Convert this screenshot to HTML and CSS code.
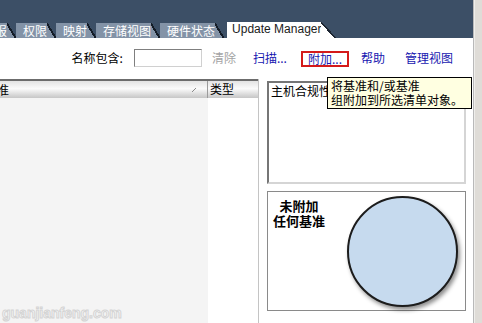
FILE: index.html
```html
<!DOCTYPE html>
<html lang="zh-CN">
<head>
    <meta charset="UTF-8">
    <title>Update Manager</title>
    <link rel="stylesheet" href="styles.css">
</head>
<body>
    <div class="window">
        <div class="main">
            <!-- Вкладки -->
            <div class="tabbar">
                <div class="tab first">警报</div>
                <div class="tab">权限</div>
                <div class="tab">映射</div>
                <div class="tab">存储视图</div>
                <div class="tab">硬件状态</div>
                <div class="tab active">Update Manager</div>
            </div>

            <!-- Панель действий -->
            <div class="toolbar">
                <label class="filter-label" for="filter">名称包含:</label>
                <input class="filter-input" id="filter" type="text">
                <span class="link disabled">清除</span>
                <a class="link scan">扫描...</a>
                <a class="link attach">附加...</a>
                <a class="link help">帮助</a>
                <a class="link admin">管理视图</a>
            </div>

            <div class="content">
                <div class="list">
                    <div class="list-head">
                        <div class="col-name"><span class="col-title">基准</span>
                            <svg class="sort" width="6" height="6" viewBox="0 0 6 6"><path d="M1 5 L5 1" stroke="#8a8a8a" stroke-width="1"/></svg>
                        </div>
                        <div class="col-type">类型</div>
                    </div>
                    <div class="list-body">
                        <div class="fill-name"></div>
                        <div class="fill-type"></div>
                    </div>
                </div>

                <div class="side">
                    <div class="compliance">
                        <div class="compliance-head">主机合规性</div>
                    </div>
                    <div class="chart">
                        <div class="chart-label">未附加<br>任何基准</div>
                        <div class="pie"></div>
                    </div>
                </div>
            </div>

            <div class="tooltip">将基准和/或基准<br>组附加到所选清单对象。</div>
            <div class="watermark">guanjianfeng.com</div>
        </div>
        <div class="edge"></div>
    </div>
</body>
</html>
```

FILE: styles.css
```css
* {
    box-sizing: border-box;
}

body {
    margin: 0;
    background: #fff;
    font-family: "Noto Sans CJK SC", sans-serif;
    font-size: 12px;
    color: #000;
}

.window {
    display: flex;
    width: 482px;
    height: 323px;
    overflow: hidden;
}

.main {
    position: relative;
    width: 474px;
    display: flex;
    flex-direction: column;
    border-right: 1px solid #b9b9b9;
}

.edge {
    flex: 1;
    background: #dfdcd7;
    border-left: 1px solid #efeeeb;
}

/* Вкладки */
.tabbar {
    height: 38px;
    flex-shrink: 0;
    background: #3c4f66;
    display: flex;
    align-items: flex-end;
}

.tab {
    position: relative;
    height: 15px;
    line-height: 15px;
    padding: 0 0 0 7px;
    margin-right: 9px;
    background: #8393a7;
    color: #fff;
    white-space: nowrap;
}

.tab::after {
    content: "";
    position: absolute;
    left: 100%;
    top: 0;
    width: 9px;
    height: 15px;
    background: linear-gradient(to top right, #8393a7 0 42%, #141c27 42% 54%, transparent 54%);
}

.tab.first {
    margin-left: -24px;
}

.tab.active {
    background: #fff;
    color: #1b1b1b;
    padding-left: 5px;
    margin-left: 3px;
    font-family: "Liberation Sans", sans-serif;
    font-size: 12px;
    height: 16px;
}

.tab.active::after {
    width: 15px;
    height: 16px;
    background: linear-gradient(to top right, #fff 0 45%, #1c2531 45% 52%, transparent 52%);
}

/* Панель действий */
.toolbar {
    height: 41px;
    flex-shrink: 0;
    display: flex;
    align-items: center;
    justify-content: flex-end;
    padding: 0 20px 2px 0;
    line-height: 16px;
}

.filter-input {
    width: 68px;
    height: 18px;
    margin: 0 0 0 11px;
    border: 1px solid #7f7f7f;
    border-right-color: #d0d0d0;
    border-bottom-color: #d0d0d0;
    padding: 0;
    background: #fff;
}

.link {
    color: #1717b0;
    white-space: nowrap;
}

.link.disabled {
    color: #a3a3a3;
    margin-left: 10px;
}

.link.scan {
    margin-left: 17px;
}

.link.attach {
    margin-left: 14px;
    margin-top: 3px;
    border: 2px solid #d41a1a;
    padding: 0 5px;
    line-height: 12px;
    height: 16px;
}

.link.help {
    margin-left: 12px;
}

.link.admin {
    margin-left: 20px;
}

/* Список */
.content {
    flex: 1;
    display: flex;
}

.list {
    width: 259px;
    display: flex;
    flex-direction: column;
    border-right: 1px solid #c4c4c4;
}

.list-head {
    display: flex;
    height: 19px;
    border-top: 2px solid #6c6c6c;
    background: linear-gradient(#e3e3e3, #fbfbfb 45%, #c6c6c6);
    line-height: 16px;
}

.col-name {
    width: 208px;
    display: flex;
    align-items: center;
    border-right: 1px solid #9b9b9b;
    overflow: hidden;
}

.col-title {
    margin-left: -15px;
}

.sort {
    margin-left: auto;
    margin-right: 10px;
}

.col-type {
    flex: 1;
    padding-left: 2px;
}

.list-body {
    flex: 1;
    display: flex;
}

.fill-name {
    width: 208px;
    background: #f4f4f4;
}

.fill-type {
    flex: 1;
    background: #fff;
}

/* Правая часть */
.side {
    flex: 1;
    padding: 2px 7px 0 8px;
}

.compliance {
    height: 103px;
    border: 2px solid;
    border-color: #767676 #d5d5d5 #d5d5d5 #767676;
    background: #fff;
}

.compliance-head {
    padding: 0 2px;
    line-height: 15px;
}

.chart {
    margin-top: 7px;
    height: 120px;
    border: 1px solid #8a8a8a;
    display: flex;
    justify-content: space-between;
    padding: 4px 7px 0 5px;
}

.chart-label {
    text-align: center;
    font-weight: bold;
    font-size: 13px;
    line-height: 15px;
    padding-top: 2px;
}

.pie {
    width: 111px;
    height: 111px;
    border-radius: 50%;
    background: #c6daee;
    border: 2px solid #1c1c1c;
    box-shadow: 2px 3px 4px rgba(0, 0, 0, 0.45);
}

/* Подсказка */
.tooltip {
    position: absolute;
    left: 327px;
    top: 77px;
    width: 145px;
    padding: 1px 3px;
    line-height: 14px;
    background: #ffffe1;
    border: 1px solid #000;
    white-space: nowrap;
}

.watermark {
    position: absolute;
    left: 2px;
    top: 305px;
    font-family: "Liberation Sans", sans-serif;
    font-weight: bold;
    font-size: 14px;
    color: #f6f6f6;
    -webkit-text-stroke: 1px #d4d4d4;
}
```
